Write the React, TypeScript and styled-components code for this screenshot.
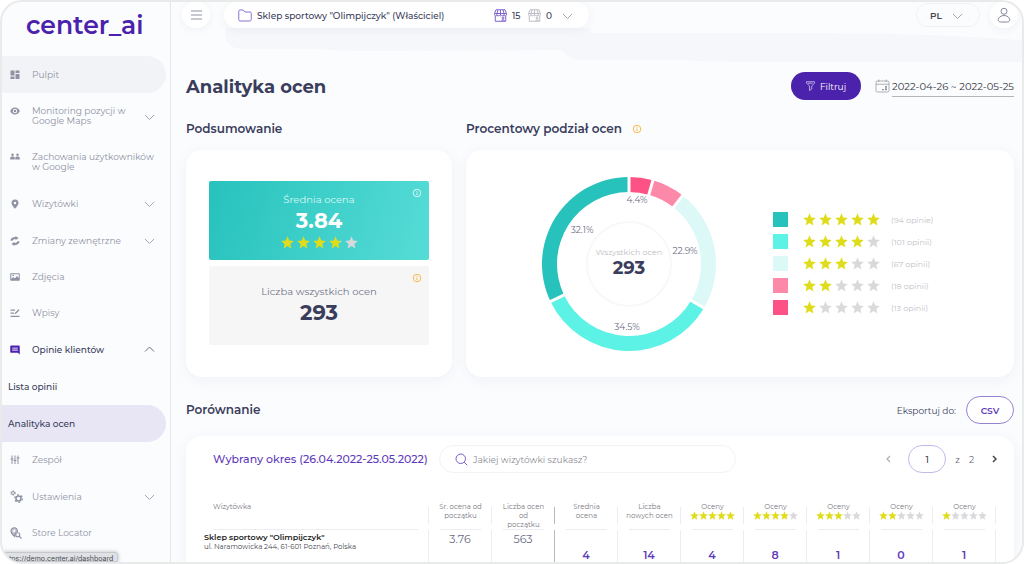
import React, { useId } from 'react';
import styled, { createGlobalStyle, css } from 'styled-components';

const c = {
  purple: '#4b22ab',
  violet: '#5f3bbb',
  ink: '#3a3d5c',
  muted: '#8f92a3',
  line: '#ededf1',
  page: '#fbfcfe',
  gold: '#dfdc1b',
  starOff: '#d9d9dc',
  amber: '#f7b84a',
};

const Global = createGlobalStyle`
  * { box-sizing: border-box; }
  body { margin: 0; background: #fff; font-family: Montserrat, Inter, "Noto Sans", sans-serif; color: ${c.ink}; }
  button, input { font-family: inherit; }
  h1, h2, h3, p, ul { margin: 0; padding: 0; }
  svg { display: block; flex: none; }
`;

const Frame = styled.div`
  position: relative;
  display: flex;
  height: 100vh;
  overflow: hidden;
  border: 2px solid #e9eaea;
  border-radius: 22px;
  background: ${c.page};
`;

/* ---------- sidebar ---------- */

const Sidebar = styled.aside`
  flex: none;
  width: 169px;
  border-right: 1px solid #e6e6ea;
`;

const Logo = styled.a`
  display: block;
  height: 54px;
  padding-left: 24px;
  color: ${c.purple};
  font-size: 25px;
  line-height: 47px;
  font-weight: 600;
  text-decoration: none;
`;

const Menu = styled.ul`
  list-style: none;
`;

const MenuLink = styled.a<{ $tall?: boolean; $wide?: boolean; $tone?: 'hover' | 'open' | 'current' | 'sub' }>`
  display: flex;
  align-items: center;
  width: 164px;
  min-height: ${p => (p.$tall ? 46 : p.$tone || p.$wide ? 37 : 36)}px;
  padding: 0 11px 0 ${p => (p.$tone === 'sub' || p.$tone === 'current' ? 6 : 8)}px;
  border-radius: 0 19px 19px 0;
  color: ${p => (p.$tone && p.$tone !== 'hover' ? c.ink : c.muted)};
  font-size: 9px;
  line-height: 10px;
  font-weight: ${p => (p.$tone && p.$tone !== 'hover' ? 500 : 400)};
  text-decoration: none;
  ${p => p.$tone === 'hover' && css`background: #f2f3f6;`}
  ${p => p.$tone === 'current' && css`background: #e8e5f5;`}
`;

const MenuIcon = styled.span<{ $raised?: boolean }>`
  display: flex;
  width: 22px;
  margin-bottom: ${p => (p.$raised ? 10 : 0)}px;
`;

const MenuText = styled.span`
  flex: 1;
  white-space: pre-line;
`;

const StatusBar = styled.div`
  position: absolute;
  left: 0;
  bottom: 0;
  height: 10px;
  padding: 1px 4px 0 6px;
  overflow: hidden;
  border: 1px solid #c6c8cc;
  border-radius: 0 3px 0 0;
  background: #dfe1e5;
  box-shadow: 0 0 4px rgba(0, 0, 0, 0.25);
  color: #4a4c52;
  font: 7px/9px Inter, sans-serif;
`;

/* ---------- header ---------- */

const Main = styled.main`
  position: relative;
  flex: 1;
  min-width: 0;
  padding: 0 8px 0 15px;
`;

const Wave = styled.svg`
  position: absolute;
  left: 0;
  top: 0;
  width: 100%;
  height: 62px;
`;

const TopBar = styled.header`
  position: relative;
  display: flex;
  align-items: center;
  height: 26px;
  margin: 0 -4px;
`;

const RoundButton = styled.button`
  display: flex;
  align-items: center;
  justify-content: center;
  width: 28px;
  height: 26px;
  padding: 0;
  border: 0;
  border-radius: 14px;
  background: #fff;
  box-shadow: 0 2px 8px rgba(60, 60, 110, 0.06);
`;

const ProjectButton = styled.button`
  display: flex;
  align-items: center;
  width: 365px;
  height: 26px;
  margin: 0 auto 0 14px;
  padding: 0 16px 0 14px;
  border: 0;
  border-radius: 13px;
  background: #fff;
  box-shadow: 0 2px 8px rgba(60, 60, 110, 0.06);
  color: ${c.ink};
  font-size: 9px;
  font-weight: 500;
`;

const ProjectName = styled.span`
  flex: 1;
  padding-left: 5px;
  text-align: left;
`;

const Count = styled.span`
  width: 21px;
  padding-left: 5px;
  text-align: left;
`;

const LangButton = styled.button`
  display: flex;
  align-items: center;
  justify-content: space-between;
  width: 64px;
  height: 24px;
  margin-right: 10px;
  padding: 0 16px 0 13px;
  border: 1px solid #f0f1f5;
  border-radius: 12px;
  background: transparent;
  color: #45464f;
  font-size: 9px;
  font-weight: 600;
`;

/* ---------- page ---------- */

const TitleRow = styled.div`
  position: relative;
  display: flex;
  align-items: center;
  justify-content: space-between;
  margin-top: 44px;
`;

const Title = styled.h1`
  padding-top: 3px;
  font-size: 18px;
  line-height: 25px;
  font-weight: 700;
`;

const Actions = styled.div`
  display: flex;
  align-items: center;
`;

const FilterButton = styled.button`
  display: flex;
  align-items: center;
  justify-content: center;
  gap: 5px;
  width: 70px;
  height: 28px;
  margin-right: 14px;
  padding: 0;
  border: 0;
  border-radius: 14px;
  background: ${c.purple};
  color: #fff;
  font-size: 9px;
`;

const DateInput = styled.input`
  width: 122px;
  height: 22px;
  margin-left: 2px;
  padding: 2px 0 0;
  border: 0;
  border-bottom: 1px solid #b4b5ba;
  outline: 0;
  background: transparent;
  color: #34353d;
  text-align: right;
  font-size: 10px;
  font-weight: 400;
`;

const Columns = styled.div`
  display: grid;
  grid-template-columns: 266fr 548fr;
  column-gap: 14px;
  margin-top: 20px;
`;

const Section = styled.section`
  display: flex;
  flex-direction: column;
`;

const SectionTitle = styled.h2`
  display: flex;
  align-items: center;
  gap: 10px;
  font-size: 12px;
  line-height: 18px;
  font-weight: 600;
`;

const Card = styled.div`
  border-radius: 16px;
  background: #fff;
  box-shadow: 0 3px 14px rgba(60, 60, 110, 0.06);
`;

const SummaryCard = styled(Card)`
  display: flex;
  flex-direction: column;
  gap: 6px;
  margin-top: 12px;
  padding: 31px 23px 32px;
`;

const Tile = styled.div<{ $accent?: boolean }>`
  position: relative;
  display: flex;
  flex-direction: column;
  align-items: center;
  justify-content: center;
  height: 79px;
  border-radius: 2px;
  background: ${p => (p.$accent ? 'linear-gradient(105deg, #27c2bc, #56dcd7)' : '#f6f6f6')};
  color: ${p => (p.$accent ? '#fff' : c.ink)};
`;

const TileLabel = styled.p<{ $accent?: boolean }>`
  color: ${p => (p.$accent ? '#d8f8f6' : '#73758a')};
  font-size: 10px;
  line-height: 15px;
`;

const TileValue = styled.p`
  padding-bottom: 1px;
  font-size: 21px;
  line-height: 28px;
  font-weight: 700;
`;

const TileInfo = styled.span`
  position: absolute;
  top: 7px;
  right: 7px;
`;

const ShareCard = styled(Card)`
  display: flex;
  align-items: center;
  gap: 56px;
  height: 227px;
  margin-top: 12px;
  padding-left: 75px;
`;

const Legend = styled.ul`
  display: flex;
  flex-direction: column;
  gap: 7px;
  list-style: none;
`;

const LegendRow = styled.li`
  display: flex;
  align-items: center;
  height: 15px;
`;

const Swatch = styled.span<{ $color: string }>`
  width: 15px;
  height: 15px;
  margin-right: 15px;
  background: ${p => p.$color};
`;

const LegendCount = styled.span`
  margin-left: 11px;
  color: #c2c2c8;
  font-size: 8px;
`;

const StarRow = styled.span<{ $gap: number }>`
  display: inline-flex;
  gap: ${p => p.$gap}px;
`;

/* ---------- comparison ---------- */

const CompareHead = styled.div`
  display: flex;
  align-items: center;
  justify-content: space-between;
  margin-top: 19px;
`;

const Export = styled.div`
  display: flex;
  align-items: center;
  gap: 10px;
  font-size: 9px;
  font-weight: 400;
`;

const CsvButton = styled.button`
  width: 48px;
  height: 28px;
  padding: 0;
  border: 1px solid #9683d3;
  border-radius: 14px;
  background: #fff;
  color: ${c.violet};
  font-size: 9px;
  font-weight: 600;
`;

const CompareCard = styled(Card)`
  margin-top: 12px;
  padding: 9px 18px 20px 0;
`;

const Toolbar = styled.div`
  display: flex;
  align-items: center;
  margin-right: -4px;
  padding-left: 27px;
`;

const Period = styled.h3`
  width: 226px;
  color: ${c.violet};
  font-size: 11px;
  line-height: 28px;
  font-weight: 500;
  white-space: nowrap;
`;

const Search = styled.label`
  display: flex;
  align-items: center;
  gap: 5px;
  width: 297px;
  height: 28px;
  margin-right: auto;
  padding: 0 15px;
  border: 1px solid #f3f3f6;
  border-radius: 14px;
`;

const SearchInput = styled.input`
  flex: 1;
  min-width: 0;
  padding: 0;
  border: 0;
  outline: 0;
  background: transparent;
  font-size: 9px;
  &::placeholder { color: #8e8e96; opacity: 1; }
`;

const Pager = styled.div`
  display: flex;
  align-items: center;
  gap: 9px;
  color: #6b6c7a;
  font-size: 9px;
`;

const PageInput = styled.input`
  width: 38px;
  height: 28px;
  margin-left: 5px;
  padding: 0;
  border: 1px solid #c5b9ea;
  border-radius: 14px;
  background: #fff;
  color: #3c3c46;
  text-align: center;
  font-size: 9px;
  font-weight: 500;
`;

const PagerButton = styled.button<{ $off?: boolean }>`
  display: flex;
  justify-content: center;
  width: 12px;
  padding: 0;
  border: 0;
  background: transparent;
  color: ${p => (p.$off ? '#b0b0b8' : '#44444c')};
`;

const Total = styled.span`
  margin-right: 5px;
`;

const Table = styled.table`
  width: 100%;
  margin-top: 29px;
  border-spacing: 0;
  table-layout: fixed;
`;

const NameCol = styled.col`
  width: 30%;
`;

const Th = styled.th<{ $name?: boolean; $strong?: boolean }>`
  height: 28px;
  padding: ${p => (p.$name ? '0 0 0 27px' : '0 4px')};
  vertical-align: top;
  text-align: ${p => (p.$name ? 'left' : 'center')};
  color: #777881;
  font-size: 7px;
  line-height: 9px;
  font-weight: 400;
  white-space: pre-line;
  background:
    linear-gradient(${p => (p.$strong ? '#b9bac0' : c.line)} 0 0) right 5px / 1px 17px no-repeat,
    linear-gradient(${c.line} 0 0) bottom ${p => (p.$name ? '0 right 11px' : '0 left 11px')} / calc(100% - ${p => (p.$name ? 39 : 22)}px) 1px no-repeat;
`;

const Td = styled.td<{ $name?: boolean; $strong?: boolean; $fresh?: boolean }>`
  height: 60px;
  padding: ${p => (p.$name ? '2px 0 0 18px' : p.$fresh ? '17px 0 0' : '1px 0 0')};
  vertical-align: top;
  text-align: ${p => (p.$name ? 'left' : 'center')};
  border-right: 1px solid ${p => (p.$strong ? '#b9bac0' : c.line)};
  color: ${p => (p.$fresh ? c.violet : '#6b6d85')};
  font-size: 11px;
  line-height: 16px;
  font-weight: ${p => (p.$fresh ? 600 : 400)};
`;

const ShopName = styled.p`
  color: #1d1d22;
  font-size: 8px;
  line-height: 10px;
  font-weight: 600;
`;

const ShopAddress = styled.p`
  color: #44454d;
  font-size: 7px;
  line-height: 10px;
  font-weight: 400;
`;

/* ---------- drawings ---------- */

const STAR = 'M12 .5l3.2 7.900 8.500.7-6.500 5.500 2 8.400L12 18.500 4.800 23l2-8.400L.3 9.100l8.500-.7z';

function Stars({ value, size = 13, gap = 3 }: { value: number; size?: number; gap?: number }) {
  const id = useId();
  return (
    <StarRow $gap={gap} role="img" aria-label={`${value} / 5`}>
      {[0, 1, 2, 3, 4].map(i => {
        const part = Math.max(0, Math.min(1, value - i));
        return (
          <svg key={i} width={size} height={size} viewBox="0 0 24 24">
            <linearGradient id={`${id}${i}`}>
              <stop offset={part} stopColor={c.gold} />
              <stop offset={part} stopColor={c.starOff} />
            </linearGradient>
            <path d={STAR} fill={`url(#${id}${i})`} />
          </svg>
        );
      })}
    </StarRow>
  );
}

function Info({ color }: { color: string }) {
  return (
    <svg width="10" height="10" viewBox="0 0 20 20" fill="none" stroke={color} strokeWidth="2">
      <circle cx="10" cy="10" r="7.500" />
      <path d="M10 9v5M10 5.800v1.700" />
    </svg>
  );
}

function Chevron({ up, color = '#a3a5b2' }: { up?: boolean; color?: string }) {
  return (
    <svg width="11" height="11" viewBox="0 0 22 22" fill="none" stroke={color} strokeWidth="2">
      <path d={up ? 'M2 15l9-9 9 9' : 'M2 8l9 9 9-9'} />
    </svg>
  );
}

function Shop({ color }: { color: string }) {
  return (
    <svg width="13" height="13" viewBox="0 0 26 26" fill="none" stroke={color} strokeWidth="1.900">
      <path d="M4 1.500h18l3 7.500v2.500a2.800 2.800 0 0 1-4.800 1.200 3.400 3.400 0 0 1-4.800 0 3.400 3.400 0 0 1-4.800 0 3.400 3.400 0 0 1-4.800 0A2.800 2.800 0 0 1 1 11.500V9zM1.500 9h23M8 2L5.800 9v3.500M13 2v10.500M18 2l2.200 7v3.500M2.500 14v10.500h21V14" />
      <circle cx="18" cy="18" r="2" />
      <path d="M15 24c0-3 6-3 6 0" />
    </svg>
  );
}

const iconPaths: Record<string, React.ReactNode> = {
  dashboard: <path d="M1 1h8v10H1zM11 1h8v5h-8zM1 13h8v5H1zM11 8h8v10h-8z" />,
  eye: <path fillRule="evenodd" d="M10 3C5.500 3 2 6 .5 10 2 14 5.500 17 10 17s8-3 9.500-7C18 6 14.500 3 10 3zm0 2.500a4.500 4.500 0 1 1 0 9 4.500 4.500 0 0 1 0-9zm0 2a2.500 2.500 0 1 0 0 5 2.500 2.500 0 0 0 0-5z" />,
  people: <path d="M5 3a2.500 2.500 0 1 1 0 5 2.500 2.500 0 0 1 0-5zm10 0a2.500 2.500 0 1 1 0 5 2.500 2.500 0 0 1 0-5zM.5 15v-3c0-2 1.500-3 4.500-3s4.500 1 4.500 3v3zm10 0v-3c0-2 1.500-3 4.500-3s4.500 1 4.500 3v3z" />,
  pin: <path fillRule="evenodd" d="M10 1a7 7 0 0 0-7 7c0 4.500 7 11.500 7 11.500S17 12.500 17 8a7 7 0 0 0-7-7zm0 4.500a2.600 2.600 0 1 1 0 5.200 2.600 2.600 0 0 1 0-5.200z" />,
  changes: <path d="M11 0l6 4-6 4.500V6C8 6 6 7 5 9.500H1C1 5 4.500 2 11 2zM9 20l-6-4 6-4.500V14c3 0 5-1 6-3.500h4c0 4.500-3.500 7.500-10 7.500z" />,
  photo: <path fillRule="evenodd" d="M2.500 2.500h15c1.200 0 2 .8 2 2v11c0 1.200-.8 2-2 2h-15c-1.200 0-2-.8-2-2v-11c0-1.200.8-2 2-2zm0 2v9.500l4-4 3 3 4.500-5 3.500 4V4.500zM5 5.500h3V8H5z" />,
  posts: <path d="M1 3h9v2.300H1zM1 9h7v2.300H1zM1 15.500h18v2.300H1zM10 9.500l7-7 2 2-7 7-3 1z" />,
  team: <path d="M3 1h2v6h2v2H5v9H3V9H1V7h2zM9 1h2v9h2v2h-2v6H9v-6H7v-2h2zM15 1h2v4h2v2h-2v11h-2V7h-2V5h2z" />,
};

function NavIcon({ name }: { name: string }) {
  if (name === 'reviews')
    return (
      <svg width="10" height="10" viewBox="0 0 20 20">
        <path d="M2.500 1h15C18.600 1 19.500 2 19.500 3v16l-4-3.500h-13c-1.200 0-2-.8-2-2V3c0-1 .9-2 2-2z" fill={c.purple} />
        <path d="M4.500 5h11v7h-11z" fill="#b6a8e2" />
        <path d="M4.500 8.500h11" stroke={c.purple} />
      </svg>
    );
  if (name === 'settings')
    return (
      <svg width="13" height="13" viewBox="0 0 26 26" fill="none" stroke={c.muted}>
        <circle cx="6" cy="6" r="3" strokeWidth="2" />
        <circle cx="6" cy="6" r="4.800" strokeWidth="1.500" strokeDasharray="2.500 2.500" />
        <circle cx="17" cy="17" r="5" strokeWidth="3" />
        <circle cx="17" cy="17" r="7.500" strokeWidth="2.500" strokeDasharray="3.900 3.950" />
      </svg>
    );
  if (name === 'locator')
    return (
      <svg width="12" height="12" viewBox="0 0 24 24" fill="none" stroke={c.muted} strokeWidth="2.200">
        <path d="M8.500 1.500A6.500 6.500 0 0 0 2 8c0 4 5.500 9.500 7.500 11l.5-4A5.500 5.500 0 0 1 15 9c.5-4.500-2.500-7.500-6.500-7.500z" fill={c.muted} fillOpacity="0.5" />
        <circle cx="8.500" cy="8" r="2.300" fill={c.page} stroke="none" />
        <circle cx="15.500" cy="15.500" r="4" />
        <path d="M18.500 18.500l4.500 4.500" />
      </svg>
    );
  return (
    <svg width="10" height="10" viewBox="0 0 20 20" fill={c.muted}>
      {iconPaths[name]}
    </svg>
  );
}

const ratings = [
  { stars: 5, count: 94, label: '(94 opinie)', color: '#27c2bc' },
  { stars: 4, count: 101, label: '(101 opinii)', color: '#5cf2e5' },
  { stars: 3, count: 67, label: '(67 opinii)', color: '#dcf9f8' },
  { stars: 2, count: 18, label: '(18 opinii)', color: '#fd89a8' },
  { stars: 1, count: 13, label: '(13 opinii)', color: '#fd5286' },
];

function Donut() {
  const total = 293;
  const mid = 88;
  const point = (r: number, share: number) => {
    const a = share * Math.PI * 2;
    return `${mid + r * Math.sin(a)} ${mid - r * Math.cos(a)}`;
  };
  let from = 0;
  const slices = [...ratings].reverse().map(({ color, count }) => {
    const start = from / total;
    from += count;
    const end = from / total;
    return (
      <path
        key={color}
        fill={color}
        d={`M${point(87, start)}A87 87 0 0 1 ${point(87, end)}L${point(72, end)}A72 72 0 0 0 ${point(72, start)}Z`}
      />
    );
  });
  const edges = [0, 13, 31, 98, 199].map(n => (
    <path key={n} d={`M${point(70, n / total)}L${point(89, n / total)}`} stroke="#fff" strokeWidth="3" />
  ));
  return (
    <svg width="176" height="176" viewBox="0 0 176 176" textAnchor="middle" fontSize="9" fill="#6b6d82">
      {slices}
      {edges}
      <circle cx="88" cy="88" r="42" fill="none" stroke="#f8f8f9" strokeWidth="2" />
      <text x="96" y="27">4.4%</text>
      <text x="144" y="78">22.9%</text>
      <text x="86" y="154">34.5%</text>
      <text x="41" y="57">32.1%</text>
      <text x="88" y="79" fontSize="8" fill="#bdbdc4">Wszystkich ocen</text>
      <text x="88" y="98" fontSize="18" fontWeight="700" fill={c.ink}>293</text>
    </svg>
  );
}

type Item = {
  text: string;
  icon?: string;
  tall?: boolean;
  arrow?: 'up' | 'down';
  tone?: 'hover' | 'open' | 'current' | 'sub';
};

const menu: Item[] = [
  { text: 'Pulpit', icon: 'dashboard', tone: 'hover' },
  { text: 'Monitoring pozycji w\nGoogle Maps', icon: 'eye', tall: true, arrow: 'down' },
  { text: 'Zachowania użytkowników\nw Google', icon: 'people', tall: true },
  { text: 'Wizytówki', icon: 'pin', arrow: 'down' },
  { text: 'Zmiany zewnętrzne', icon: 'changes', arrow: 'down' },
  { text: 'Zdjęcia', icon: 'photo' },
  { text: 'Wpisy', icon: 'posts' },
  { text: 'Opinie klientów', icon: 'reviews', arrow: 'up', tone: 'open' },
  { text: 'Lista opinii', tone: 'sub' },
  { text: 'Analityka ocen', tone: 'current' },
  { text: 'Zespół', icon: 'team' },
  { text: 'Ustawienia', icon: 'settings', arrow: 'down' },
  { text: 'Store Locator', icon: 'locator' },
];

const fresh = ['4', '14', '4', '8', '1', '0', '1'];

export default function App() {
  return (
    <>
      <Global />
      <Frame>
        <Sidebar>
          <Logo href="#">center_ai</Logo>
          <nav>
            <Menu>
              {menu.map(item => (
                <li key={item.text}>
                  <MenuLink href="#" $tall={item.tall} $wide={!!item.arrow} $tone={item.tone}>
                    {item.icon && (
                      <MenuIcon $raised={item.tall}>
                        <NavIcon name={item.icon} />
                      </MenuIcon>
                    )}
                    <MenuText>{item.text}</MenuText>
                    {item.arrow && <Chevron up={item.arrow === 'up'} color={item.arrow === 'up' ? '#6b6d82' : undefined} />}
                  </MenuLink>
                </li>
              ))}
            </Menu>
          </nav>
        </Sidebar>

        <Main>
          <Wave viewBox="0 0 851 62" preserveAspectRatio="none" aria-hidden="true">
            <path d="M54 26V34Q56 47 74 47H150Q170 49 200 49L390 48Q400 58 410 58H500L560 60H851V38L780 34Q720 31 640 31H420V26Z" fill="#f6f7fb" />
          </Wave>
          <TopBar>
            <RoundButton aria-label="Menu">
              <svg width="11" height="10" viewBox="0 0 11 10" stroke="#8f92a3">
                <path d="M0 1h11M0 5h11M0 9h11" />
              </svg>
            </RoundButton>
            <ProjectButton>
              <svg width="14" height="13" viewBox="0 0 28 26" fill="none" stroke="#8a70d0" strokeWidth="2">
                <path d="M4 2h6.500l3.500 4h10q2.500 0 2.500 2.500v12.500q0 3-3 3h-19q-3 0-3-3V4.500Q1.500 2 4 2z" />
              </svg>
              <ProjectName>Sklep sportowy "Olimpijczyk" (Właściciel)</ProjectName>
              <Shop color="#7a5cc9" />
              <Count>15</Count>
              <Shop color="#b9bac4" />
              <Count>0</Count>
              <Chevron />
            </ProjectButton>
            <LangButton>
              PL
              <Chevron />
            </LangButton>
            <RoundButton aria-label="Konto">
              <svg width="14" height="16" viewBox="0 0 28 32" fill="none" stroke="#85889c" strokeWidth="2">
                <circle cx="14" cy="8.500" r="6" />
                <path d="M14 17c6 0 11.500 4 11.500 8.500 0 3-2 4.500-5 4.500h-13c-3 0-5-1.500-5-4.500C2.500 21 8 17 14 17z" />
              </svg>
            </RoundButton>
          </TopBar>

          <TitleRow>
            <Title>Analityka ocen</Title>
            <Actions>
              <FilterButton>
                <svg width="9" height="10" viewBox="0 0 18 20" fill="none" stroke="#d9d0f2" strokeWidth="1.500">
                  <path d="M1 1.500h16v2.500l-5.500 6V16L7 19v-9L1 4zM4 4.500h9" />
                </svg>
                Filtruj
              </FilterButton>
              <svg width="15" height="14" viewBox="0 0 30 28" fill="none" stroke="#94959e" strokeWidth="1.500">
                <rect x="2" y="4" width="26" height="22" rx="3" />
                <path d="M2 10.500h26M7.500 1v5M22.500 1v5" />
                <path d="M14 21h4M20 21h4M20 15h4M20 18h4" strokeWidth="2.500" />
              </svg>
              <DateInput aria-label="Zakres dat" defaultValue="2022-04-26 ~ 2022-05-25" />
            </Actions>
          </TitleRow>

          <Columns>
            <Section>
              <SectionTitle>Podsumowanie</SectionTitle>
              <SummaryCard>
                <Tile $accent>
                  <TileLabel $accent>Średnia ocena</TileLabel>
                  <TileValue>3.84</TileValue>
                  <Stars value={3.84} />
                  <TileInfo><Info color="#d8f8f6" /></TileInfo>
                </Tile>
                <Tile>
                  <TileLabel>Liczba wszystkich ocen</TileLabel>
                  <TileValue>293</TileValue>
                  <TileInfo><Info color={c.amber} /></TileInfo>
                </Tile>
              </SummaryCard>
            </Section>
            <Section>
              <SectionTitle>
                Procentowy podział ocen
                <Info color={c.amber} />
              </SectionTitle>
              <ShareCard>
                <Donut />
                <Legend>
                  {ratings.map(r => (
                    <LegendRow key={r.stars}>
                      <Swatch $color={r.color} />
                      <Stars value={r.stars} />
                      <LegendCount>{r.label}</LegendCount>
                    </LegendRow>
                  ))}
                </Legend>
              </ShareCard>
            </Section>
          </Columns>

          <CompareHead>
            <SectionTitle>Porównanie</SectionTitle>
            <Export>
              Eksportuj do:
              <CsvButton>CSV</CsvButton>
            </Export>
          </CompareHead>

          <CompareCard>
            <Toolbar>
              <Period>Wybrany okres (26.04.2022-25.05.2022)</Period>
              <Search>
                <svg width="13" height="13" viewBox="0 0 26 26" fill="none" stroke="#7a5cc9" strokeWidth="2">
                  <circle cx="11.500" cy="11.500" r="9.500" />
                  <path d="M18.500 18.500l6 6" />
                </svg>
                <SearchInput type="text" aria-label="Szukaj wizytówki" placeholder="Jakiej wizytówki szukasz?" />
              </Search>
              <Pager>
                <PagerButton $off aria-label="Poprzednia">
                  <svg width="5" height="8" viewBox="0 0 10 16" fill="none" stroke="currentColor" strokeWidth="2.500"><path d="M8 2L2 8l6 6" /></svg>
                </PagerButton>
                <PageInput aria-label="Strona" defaultValue="1" />
                <span>z</span>
                <Total>2</Total>
                <PagerButton aria-label="Następna">
                  <svg width="5" height="8" viewBox="0 0 10 16" fill="none" stroke="currentColor" strokeWidth="3"><path d="M2 2l6 6-6 6" /></svg>
                </PagerButton>
              </Pager>
            </Toolbar>

            <Table>
              <colgroup>
                <NameCol />
                <col span={9} />
              </colgroup>
              <thead>
                <tr>
                  <Th $name>Wizytówka</Th>
                  <Th>{'Śr. ocena od\npoczątku'}</Th>
                  <Th $strong>{'Liczba ocen\nod\npoczątku'}</Th>
                  <Th>{'Średnia\nocena'}</Th>
                  <Th>{'Liczba\nnowych ocen'}</Th>
                  {[5, 4, 3, 2, 1].map(n => (
                    <Th key={n}>
                      {'Oceny\n'}
                      <Stars value={n} size={9} gap={0} />
                    </Th>
                  ))}
                </tr>
              </thead>
              <tbody>
                <tr>
                  <Td $name>
                    <ShopName>Sklep sportowy "Olimpijczyk"</ShopName>
                    <ShopAddress>ul. Naramowicka 244, 61-601 Poznań, Polska</ShopAddress>
                  </Td>
                  <Td>3.76</Td>
                  <Td $strong>563</Td>
                  {fresh.map((n, i) => (
                    <Td key={i} $fresh>{n}</Td>
                  ))}
                </tr>
              </tbody>
            </Table>
          </CompareCard>
        </Main>
        <StatusBar>tps://demo.center.ai/dashboard</StatusBar>
      </Frame>
    </>
  );
}
